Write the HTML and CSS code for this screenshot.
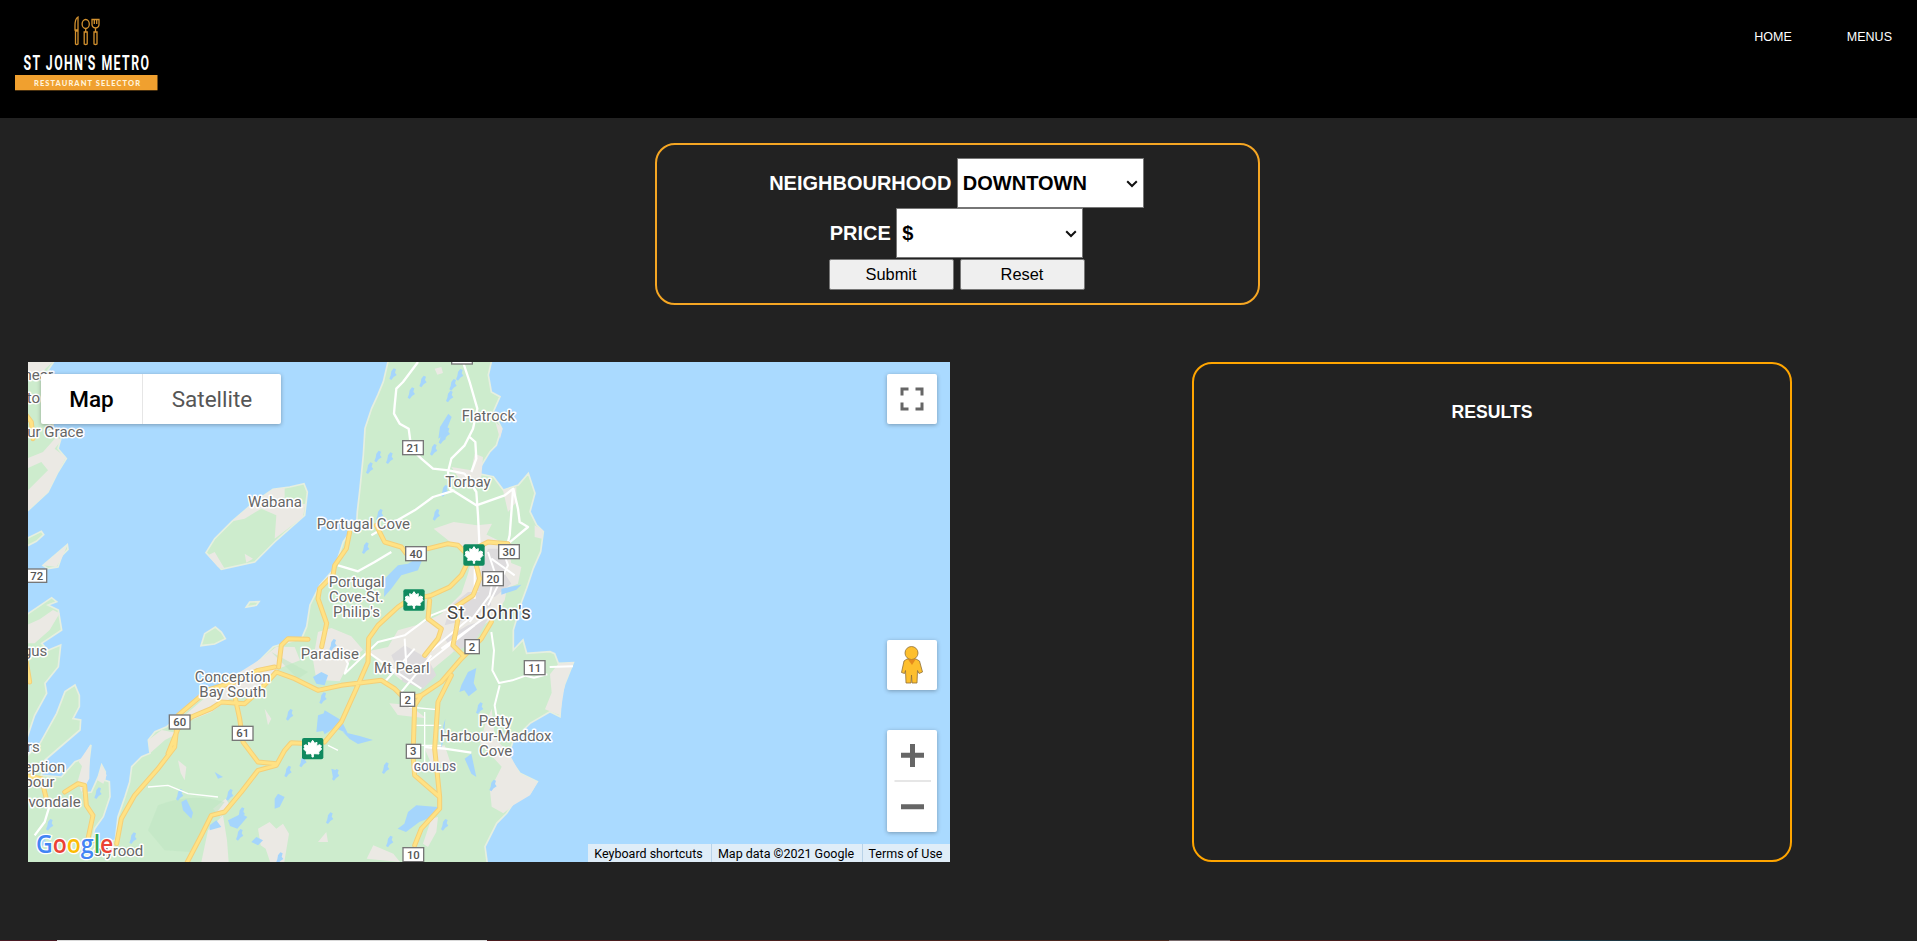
FILE: index.html
```html
<!DOCTYPE html>
<html lang="en">
<head>
<meta charset="utf-8">
<title>St John's Metro Restaurant Selector</title>
<link rel="stylesheet" href="styles.css">
</head>
<body>
<header class="header">
  <svg class="logo" width="172" height="118" viewBox="0 0 172 118">
    <g fill="none" stroke="#d3912f" stroke-width="1.3">
      <path d="M78 17c-2 1-3 5-3 9v4h3zM75.500 31h2.500v13q-1.300 1-2.500 0z"/>
      <ellipse cx="85.700" cy="24" rx="3.600" ry="4.500"/>
      <path d="M85.700 28.500V32M84.200 32h3v12q-1.500 1-3 0z"/>
      <path d="M92 19.500v5q0 3 3.600 3.500q3.400-.500 3.400-3.500v-5zM94.300 19.500v4.500M96.700 19.500v4.500M95.500 28v4M94 32h3v12q-1.500 1-3 0z"/>
    </g>
    <text class="logo-name" x="23.500" y="70" textLength="127" lengthAdjust="spacingAndGlyphs">ST JOHN'S METRO</text>
    <rect x="15" y="75" width="142.500" height="15.300" fill="#f0a02f"/>
    <text class="logo-sub" x="34" y="85.500" textLength="106" lengthAdjust="spacing">RESTAURANT SELECTOR</text>
  </svg>
  <nav class="nav"><a>HOME</a><a>MENUS</a></nav>
</header>

<form class="search">
  <div class="row"><label>NEIGHBOURHOOD</label> <div class="select"><select><option>DOWNTOWN</option></select><svg width="12" height="8" viewBox="0 0 12 8"><path d="M1.200 1.200L6 6l4.800-4.800"/></svg></div></div>
  <div class="row"><label>PRICE</label> <div class="select"><select><option>$</option></select><svg width="12" height="8" viewBox="0 0 12 8"><path d="M1.200 1.200L6 6l4.800-4.800"/></svg></div></div>
  <div class="buttons"><button type="button">Submit</button><button type="button">Reset</button></div>
</form>

<main class="content">
  <section class="map">
    <svg class="tiles" viewBox="0 0 2766 1500">
      <defs>
        <g id="park"><rect x="-32" y="-32" width="64" height="64" rx="6" fill="#0f8a5f"/><path fill="#fff" stroke="#fff" stroke-width="3" stroke-linejoin="round" d="M0-25l6 9 7-3-1 12 8-5 6 3-2 6 3 4-9 9 1 6-13-1-4 3v7h-4v-7l-4-3-13 1 1-6-9-9 3-4-2-6 6-3 8 5-1-12 7 3z"/></g>
        <path id="lake" d="M0 0l7-9 7 3-3 10 5 7-9 6-7 9-6-4 4-10z"/>
        <path id="roads" d="M478 1500L520 1420 550 1360 590 1350 640 1290 690 1225 745 1210 770 1165 790 1142 850 1145M890 1140L940 1080 985 980 1020 900 1022 830 1050 790 1110 735 1140 715 1210 700 1265 675 1300 640 1322 595M266 1445L280 1370 320 1300 390 1220 440 1155 450 1060 540 984M420 1175L450 1100 490 1065 550 1040 580 1020 650 1025 690 990 745 930 800 950 870 985 940 970 1060 955 1100 980 1130 1010 1180 1000 1240 960 1300 890 1360 830 1390 780M540 984L620 960 690 925 740 915M752 915L760 850 780 830 840 832M620 1000L635 1070 645 1140 690 1200 745 1205M965 510L955 560 920 610 915 640 875 680 870 710 896 784 881 854M1045 490L1070 540 1120 555 1135 575M1200 560L1260 545 1290 550 1320 580M1340 560L1380 540 1440 545M1345 610l10 40-20 50-60 40M1290 770l-5 30-10 50 30 30M1205 715l-5 55 40 30-10 30-40 50M1180 1000L1160 1030 1155 1180 1160 1240 1235 1305 1235 1340 1180 1400 1160 1450M1270 940L1230 1020 1220 1160 1235 1305M190 1440L180 1430 195 1360 175 1330 170 1270 150 1265 110 1290M-10 1240l50 10 15 60M-5 160l15 20 5 50M-5 900l10 60"/>
      </defs>
      <!-- land -->
      <g fill="#cdeccd" stroke="#e6efe0" stroke-width="5">
        <path d="M1081-5L1066 59 1050 98 1031 139 1011 199 1006 279 996 379 988 449 986 485 971 504 946 539 920 619 876 669 846 729 836 794 821 829 736 854 696 894 666 919 610 955 546 984 466 1054 416 1094 381 1109 361 1134 366 1174 341 1184 311 1214 305 1260 291 1304 270 1364 262 1434 216 1450 190 1444 200 1400 226 1364 246 1304 244 1259 230 1255 232 1230 221 1209 211 1244 190 1290 166 1294 176 1254 181 1214 189 1149 165 1190 141 1199 100 1245 40 1240 51 1194 86 1164 156 1104 158 1074 135 1070 154 1034 154 1000 141 969 111 989 86 1054 36 1144-5 1184V1505H1378L1371 1454 1406 1384 1436 1354 1456 1324 1506 1294 1528 1259 1476 1234 1441 1184 1456 1134 1506 1084 1566 1049 1596 1064 1600 1000 1611 964 1636 902 1591 904 1580 875 1566 869 1496 874 1485 834 1456 864 1456 804 1481 719 1496 679 1516 619 1538 569 1546 509 1526 489 1506 449 1521 394 1501 334 1471 369 1426 384 1396 344 1346 334 1361 309 1386 269 1405 250 1421 199 1396 149 1416 104 1390 90 1381 39 1391-5z"/>
        <path d="M-5 1134L20 1060 56 994 51 964 91 914 98 849 60 865 41 844 101 804 91 744 60 729 86 719 71 707-5 759z"/>
        <path d="M534 572L560 530 612 478 680 420 735 382 785 375 828 365 838 390 830 460 740 540 680 600 580 622z"/>
        <path d="M519 851L530 815 562 795 580 810 592 830 560 846z"/>
        <path d="M-5-5H80L60 25 40 50 45 75 75 80V200L100 225 90 260 115 290 90 330 60 390-5 450zM655 735l10-15 28-1-8 11z"/>
        <path d="M-5 530l45-22 7 10-22 20-30 15zM45 610L80 580 118 548 120 562 102 580 90 615 60 620z"/>
      </g>
      <!-- open ground and settlements -->
      <g fill="#ebe9e4">
        <path d="M-5-5H80L52 20 35 45-5 55zM-5 290l50-20 40-45 15 10-20 25 34 26-24 44-30 60-60 55v-60l60-60-20-25-45 20zM-5 790l40-18 40-28 20 10-30 50-45 40H-5zM45 610l35-30 38-30-15 35-18 30z"/>
        <path d="M612 478L680 420 735 382 770 378 770 415 805 430 832 425 825 465 740 530 745 460 700 440 650 470zM560 570l30 50-20-5-30-35zM650 575l25 15-20 12z"/>
        <path d="M636 930L700 890 745 854 800 855 816 895 740 925 690 980 620 1000 550 1050 500 1070 470 1060 540 1000zM361 1134l40-30 50 10-40 20-45 40z"/>
        <path d="M870 810l40-12 60 25 35 40-40 35-30 60-70-5-10-60zM1010 870l70-15 30-50 70-20 60-30 60-60 20-60 20-70 40-30 60 10 10 60-10 60-10 50-30 50-70 50-60 60-60 50-90 30-60-50-50-40z"/>
        <path d="M1217 500l60-20 70 10 45-5-25 50-50 30-50-25zM1270 315l60 10 10-50 25 10-5 60-50 30zM1345 525l25-10 40 20 20 60 50 20-10 50-50 20-60-50zM1425 385l40-10v45l-25 30z"/>
        <path d="M1371 1090l20-50 10 90 40 40 35 65 53 25-23 40-50 30-30 24-35-20-5-50 35-70-65-70zM1591 905l45-5-25 65-15 95-45-18 20-50-5-55zM1084 1024l60 5 50 40-85-10zM1190 1160l60-10 20 60-60-5zM1416 230l8-30-22-20zM1220 20l20-5 5 18-17 5zM1520 490l25 15-3 25-22-5z"/>
        <path d="M520 1500l20-95 45-45 12 75 5 65zM690 1400l35-20 20 20 20-15 18 30-5 30-10 60h-40l-15-45-15-10zM555 1340l38-30 10 15-25 40zM1016 1490l20-40 60 25 20 25zM870 1440l25-30 5 30zM186 1150l-2 100-24 40-10-35 12-42-10-14zM221 1210l15 30-10 25-18-10zM450 1195l25 20-5 40-12-22zM710 1040l20 30-10 20zM1210 1370l20-5-5 45-25 45-15-10z"/>
      </g>
      <path fill="#dddbdd" d="M1380 560l30 0 30 35-10 40 20 30-50 40-60-20 20-60zM1320 690l60 0 10 40-60 40-80 20 20-60zM1090 880l40-30 70 40 25 50-40 40-60-20zM1250 830l70-40 60-20-40 70-60 30z"/>
      <path fill="#bfe6c3" opacity=".6" d="M390 1330q100-40 200-10l-30 40-70 110-80-5-50-60zM730 870l110 60-30 20z"/>
      <!-- inland water -->
      <g fill="#a5d5fc">
        <use href="#lake" x="1090" y="28"/><use href="#lake" x="1145" y="85"/><use href="#lake" x="1180" y="50"/><use href="#lake" x="1270" y="60"/><use href="#lake" x="1260" y="95"/><use href="#lake" x="1250" y="205"/><use href="#lake" x="1238" y="220"/><use href="#lake" x="1212" y="255"/><use href="#lake" x="1045" y="275"/><use href="#lake" x="1080" y="280"/><use href="#lake" x="1020" y="310"/><use href="#lake" x="1220" y="450"/><use href="#lake" x="1290" y="30"/><use href="#lake" x="1050" y="450"/><use href="#lake" x="1008" y="550"/><use href="#lake" x="1245" y="378"/>
        <path d="M1070 650l40-40 30-5 50-30-20 50-50 15-30 40-22 25zM1236 195l25-40 10 10-20 50-20 15zM880 1075l10-30 30 18 20 12 20 40-40-18-30 20-12-25zM945 1110l50 12 40 12-45 12-25-15zM1140 1350l25-20 64 5-5 25-50 20-40 30-25-10 20-15zM1300 970l20-40 25-12-8 45 10 20-25 20-13-18-15 5zM1310 1190l20-15 15 70-15-10zM1246 1090l6-20-6 70-8 20zM855 945l25-15 20 10-10 30-25-5zM460 1320l15-8 20 40-5 18-25-25zM600 1375l40-20 18 10-30 35-22-8zM545 1390l20-15 15 20-35 10zM870 1060l30-10 25 40-25 15-35 5zM560 1230l25 15-15 5zM740 1310l10-15 20 10-15 30-15 5zM670 1440l15-15 20 10-15 15zM910 1220l15 5 5 20-15 2zM1420 680l60-12-15 15-45 15z"/>
        <use href="#lake" x="775" y="1220"/><use href="#lake" x="820" y="1190"/><use href="#lake" x="918" y="1230"/><use href="#lake" x="780" y="1050"/><use href="#lake" x="880" y="1000"/><use href="#lake" x="600" y="1290"/><use href="#lake" x="635" y="1345"/><use href="#lake" x="630" y="1410"/><use href="#lake" x="310" y="1420"/><use href="#lake" x="450" y="1290"/><use href="#lake" x="60" y="1380"/><use href="#lake" x="40" y="1430"/><use href="#lake" x="900" y="1360"/><use href="#lake" x="1068" y="1210"/><use href="#lake" x="1245" y="1380"/><use href="#lake" x="1080" y="1430"/><use href="#lake" x="750" y="1480"/><use href="#lake" x="1390" y="1262"/><use href="#lake" x="1350" y="1030"/><use href="#lake" x="205" y="1285"/><use href="#lake" x="910" y="840"/>
      </g>
      <!-- minor roads -->
      <g fill="none" stroke="#fff" stroke-width="7" stroke-linejoin="round">
        <path d="M1170 0L1125 60 1105 80 1100 130 1098 155 1115 185 1142 200 1150 260 1180 290 1215 320 1262 325 1310 335M1305 0L1325 60 1348 140 1335 200 1310 250 1270 290 1260 330 1266 380 1345 430 1430 400 1456 380 1470 440 1475 480 1500 495 1440 545M1310 335L1345 390 1350 460 1355 560M1280 385L1215 405 1160 445 1030 520M1090 570L1040 600 990 628 930 610M1325 225L1342 240 1345 290 1330 330M1455 385L1445 520 1440 540"/>
        <path stroke-width="6" d="M936 862L960 905 950 935 1050 840 1130 820 1210 760 1310 720M1020 870L1090 920 1180 980M1130 830l5 80M1210 865l120-100M1200 900l140-110M1240 860l140-100M1070 960l90-100M1120 990l90-110M1380 570l20 60-15 70-60 80M1420 550l20 60-60 120M1340 620v90M1390 590l70 50M1390 810l8 55-5 60 20 38 40-8 40-14 25 6 40-10M1415 970l-15 60 5 30M1565 915l70-2"/>
        <path stroke-width="4" d="M1142 1035l85 8M1190 1050v180M1160 1090h80M1160 1150h80M360 1275l60-5 60 25 90 10M900 1150l30 15"/>
        <path d="M1190 1155l60 5 80 12M20 1420l30-40 15-50"/>
      </g>
      <!-- highways -->
      <g fill="none" stroke-linejoin="round" stroke-linecap="round">
        <use href="#roads" stroke="#f4cf78" stroke-width="15"/>
        <use href="#roads" stroke="#ffe284" stroke-width="9"/>
      </g>
      <!-- route shields -->
      <g class="shield">
        <rect x="1124" y="236" width="62" height="42"/><text x="1155" y="270">21</text>
        <rect x="1133" y="554" width="62" height="42"/><text x="1164" y="588">40</text>
        <rect x="1412" y="548" width="62" height="42"/><text x="1443" y="581">30</text>
        <rect x="1364" y="629" width="62" height="42"/><text x="1395" y="662">20</text>
        <rect x="-6" y="621" width="62" height="40"/><text x="26" y="654">72</text>
        <rect x="424" y="1059" width="62" height="42"/><text x="455" y="1092">60</text>
        <rect x="613" y="1093" width="62" height="42"/><text x="644" y="1126">61</text>
        <rect x="1311" y="833" width="43" height="42"/><text x="1332" y="867">2</text>
        <rect x="1489" y="896" width="62" height="42"/><text x="1520" y="929">11</text>
        <rect x="1117" y="991" width="43" height="42"/><text x="1139" y="1025">2</text>
        <rect x="1135" y="1147" width="43" height="42"/><text x="1156" y="1180">3</text>
        <rect x="1125" y="1457" width="62" height="42"/><text x="1156" y="1490">10</text>
        <rect x="1271" y="-36" width="62" height="42"/>
      </g>
      <use href="#park" x="1338" y="579"/><use href="#park" x="1158" y="714"/><use href="#park" x="854" y="1160"/>
      <!-- place names -->
      <g class="place">
        <text x="1301" y="178" textLength="160">Flatrock</text><text x="1252" y="376" textLength="136">Torbay</text>
        <text x="866" y="502" textLength="280">Portugal Cove</text><text x="660" y="435" textLength="162">Wabana</text>
        <text x="902" y="676" textLength="168">Portugal</text><text x="903" y="720" textLength="164">Cove-St.</text><text x="915" y="765" textLength="141">Philip's</text>
        <text x="818" y="892" textLength="175">Paradise</text><text x="1038" y="933" textLength="167">Mt Pearl</text>
        <text x="500" y="959" textLength="228">Conception</text><text x="514" y="1004" textLength="200">Bay South</text>
        <text x="1352" y="1091" textLength="100">Petty</text><text x="1235" y="1137" textLength="335">Harbour-Maddox</text><text x="1353" y="1182" textLength="100">Cove</text>
        <text x="166" y="226" text-anchor="end">ur Grace</text><text x="75" y="54" text-anchor="end">near</text><text x="36" y="124" text-anchor="end">to</text>
        <text x="58" y="881" text-anchor="end">gus</text><text x="35" y="1170" text-anchor="end">rs</text><text x="112" y="1231" text-anchor="end">eption</text><text x="80" y="1276" text-anchor="end">bour</text><text x="158" y="1336" text-anchor="end">vondale</text><text x="346" y="1481" text-anchor="end">olyrood</text>
        <text class="city" x="1257" y="770" textLength="252">St. John's</text><text class="district" x="1157" y="1226" textLength="127">GOULDS</text>
      </g>
      <text class="google" y="1472" textLength="232" lengthAdjust="spacingAndGlyphs" x="24"><tspan fill="#4285f4">G</tspan><tspan fill="#ea4335">o</tspan><tspan fill="#fbbc05">o</tspan><tspan fill="#4285f4">g</tspan><tspan fill="#34a853">l</tspan><tspan fill="#ea4335">e</tspan></text>
    </svg>
    <div class="controls map-type"><span class="active">Map</span><span>Satellite</span></div>
    <div class="controls fullscreen"><svg width="24" height="24" viewBox="0 0 24 24"><path fill="none" stroke="#666" stroke-width="3" d="M2 8.500V2h6.500M15.500 2H22v6.500M22 15.500V22h-6.500M8.500 22H2v-6.500"/></svg></div>
    <div class="controls pegman"><svg width="24" height="40" viewBox="0 0 24 40"><g fill="#fdbf2d" stroke="#8f7038" stroke-width=".8"><path d="M7 14h9l3.500 2 3 11-3.500 1.500-1.500-3-.500 12.500h-5l-.500-8-.500 8h-5L5.500 25.500 4.500 28.500 1.500 27.500 4 16z"/><circle cx="11.500" cy="8" r="6.500"/></g><path fill="#e58a1c" d="M8 14.500h7.500L12 20z"/></svg></div>
    <div class="controls zoom"><svg width="50" height="102" viewBox="0 0 50 102"><path stroke="#666" stroke-width="5" d="M14 25.300h23M25.500 14v23M14 76.700h23"/><path stroke="#e6e6e6" stroke-width="2" d="M7.500 51H44"/></svg></div>
    <div class="credits"><span>Keyboard shortcuts</span><span>Map data ©2021 Google</span><span>Terms of Use</span></div>
  </section>
  <section class="results"><h3>RESULTS</h3></section>
</main>
<footer class="strip"></footer>
</body>
</html>
```
FILE: styles.css
```css
* { box-sizing: border-box; }
body { margin: 0; height: 941px; overflow: hidden; background: #222; color: #fff; font-family: "Liberation Sans", Arial, sans-serif; display: flex; flex-direction: column; }
.header { flex: none; height: 118px; background: #000; display: flex; justify-content: space-between; }
.logo-name { font: 700 21px Roboto, sans-serif; letter-spacing: 2.500px; fill: #fff; }
.logo-sub { font: 900 7.500px Lato, sans-serif; fill: #fff3da; }
.nav { display: flex; gap: 55px; padding: 30px 25px 0 0; font-size: 12.500px; line-height: 15px; }
.search { flex: none; width: 605px; height: 162px; margin: 25px 0 0 655px; padding: 13px 2px 0 0; border: 2px solid #f5a623; border-radius: 20px; text-align: center; font-size: 20px; font-weight: 700; }
.row { height: 50px; display: flex; justify-content: center; align-items: center; gap: 5.500px; }
.select { position: relative; display: flex; }
.select select { appearance: none; width: 187px; height: 50px; padding: 0 5px; border: 1px solid #767676; border-radius: 0; background: #fff; color: #000; font: inherit; }
.select svg { position: absolute; right: 6px; top: 22px; fill: none; stroke: #111; stroke-width: 2; }
.buttons { display: flex; justify-content: center; gap: 6px; padding-top: 1px; }
.buttons button { width: 125px; height: 31px; padding: 0; background: #efefef; border: 1px solid #767676; border-radius: 2px; color: #000; font: 16.400px "Liberation Sans", Arial, sans-serif; }
.content { flex: none; display: flex; justify-content: space-between; margin: 57px 125px 0 28px; height: 500px; }
.map { position: relative; width: 922px; height: 500px; overflow: hidden; background: #aadaff; font-family: Roboto, sans-serif; }
.tiles { display: block; width: 922px; height: 500px; }
.shield rect { fill: #fff; stroke: #777; stroke-width: 4; }
.shield text { font: 500 34px Roboto, sans-serif; fill: #555; text-anchor: middle; }
.place text { font: 400 45px Roboto, sans-serif; fill: #666; stroke: #fff; stroke-width: 9px; stroke-linejoin: round; paint-order: stroke; }
.place .city { font-size: 56px; fill: #444; }
.place .district { font-size: 33px; font-weight: 500; fill: #667; }
.google { font: 600 74px "Open Sans", sans-serif; stroke: #fff; stroke-width: 8px; paint-order: stroke; }
.controls { position: absolute; display: flex; align-items: center; justify-content: center; background: #fff; border-radius: 2px; box-shadow: 0 1px 4px rgba(0, 0, 0, .3); }
.map-type { left: 13px; top: 12px; width: 240px; height: 50px; font-size: 22.500px; color: #565656; }
.map-type span { flex: 1; height: 50px; line-height: 50px; text-align: center; }
.map-type .active { flex: 0 0 102px; color: #000; font-weight: 500; border-right: 1px solid #e6e6e6; }
.fullscreen, .pegman { right: 13px; width: 50px; height: 50px; }
.fullscreen { top: 12px; }
.pegman { top: 278px; }
.zoom { right: 13px; top: 368px; width: 50px; height: 102px; }
.credits { position: absolute; right: 0; bottom: 0; width: 362px; height: 18px; display: grid; grid-template-columns: 123px 151px 88px; background: rgba(245, 245, 245, .7); color: #000; font-size: 12.500px; line-height: 19px; text-align: center; white-space: nowrap; }
.credits span { padding-right: 2px; }
.credits span + span { border-left: 1px solid #b9d3e8; }
.results { width: 600px; height: 500px; border: 2px solid #ffa500; border-radius: 20px; text-align: center; }
.results h3 { margin: 38px 0 0; font-size: 17.600px; line-height: 20px; }
.strip { flex: none; height: 1px; margin-top: 78px; background: linear-gradient(90deg, #4a1a24 57px, #d9d9d9 57px 487px, #4a1a1e 487px, #4a2a20 1169px, #77696a 1169px 1230px, #4a201c 1230px, #431b20 1480px, #1d3a48 1560px, #222 1917px); }
```
